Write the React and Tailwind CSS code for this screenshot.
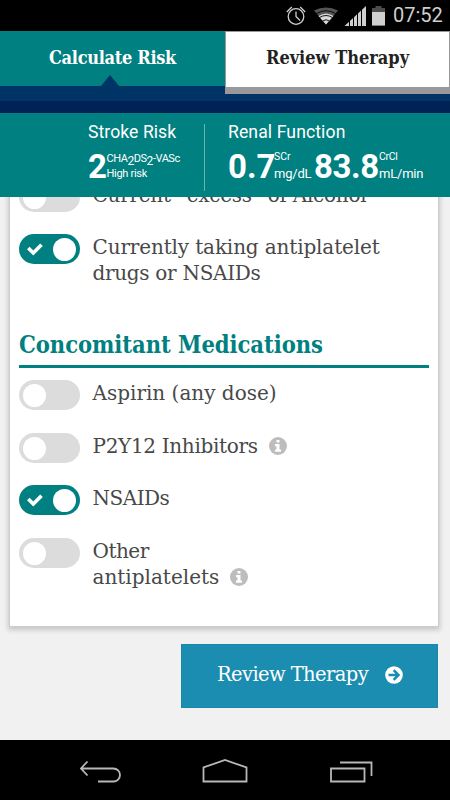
import React from 'react';

const slabBold = "font-['DejaVu_Serif_Condensed','DejaVu_Serif',serif] [font-stretch:condensed] font-bold";
const slab = "font-['DejaVu_Serif',serif]";

function StatusBar() {
  return (
    <div className="flex h-[31px] shrink-0 items-center justify-end bg-black pr-[7px] text-[#cfcfcf]">
      <svg width="104" height="24" viewBox="0 0 104 24" fill="none">
        <g stroke="#cfcfcf" strokeWidth="1.3">
          <circle cx="11" cy="12.5" r="7.800" />
          <path d="M11 7.500v5l4 4M1.800 8l5-5M20.200 8l-5-5" />
        </g>
        <path d="M29 6.500Q41 .500 53 6.500L41 20.500Z" fill="#555" />
        <path d="M33.500 12Q41 7 48.500 12L41 20.500Z" fill="#d8d8d8" />
        <path d="M31.500 9.500Q41 4 50.500 9.500M34.500 13.500Q41 9.500 47.500 13.500M37.500 17Q41 14.500 44.500 17" stroke="#000" strokeWidth="0.9" />
        <path d="M59.500 22L81 2v20Z" fill="#cfcfcf" />
        <path d="M64.500 2v20M68.500 2v20M72.500 2v20M76.500 2v20" stroke="#000" strokeWidth="1" />
        <path d="M90.500 2h6v2h3.500v17.500H87V4h3.500Z" fill="#4c4c4c" />
        <path d="M87 8h13v13.500H87Z" fill="#cfcfcf" />
      </svg>
      <span className="ml-[4px] w-[50px] whitespace-nowrap font-['Roboto',sans-serif] text-[20px] leading-[31px]">07:52</span>
    </div>
  );
}

function Tabs() {
  return (
    <div className="flex h-[70px] shrink-0 items-start bg-[#003366]">
      <div className="flex h-[55px] w-[225px] flex-col items-center bg-[#008080]">
        <span className={`${slabBold} mt-[13px] h-[31px] whitespace-nowrap text-[18px] leading-[28px] tracking-[-0.300px] text-white`}>
          Calculate Risk
        </span>
        <svg className="-ml-[5px]" width="18" height="11" viewBox="0 0 18 11"><path d="M0 11L9 0l9 11Z" fill="#003366" /></svg>
      </div>
      <div className="h-[63px] w-[225px] border-x border-t border-b-[7px] border-[#999] bg-white text-center">
        <span className={`${slabBold} mt-[12px] block whitespace-nowrap text-[18px] leading-[28px] text-[#222]`}>
          Review Therapy
        </span>
      </div>
    </div>
  );
}

function Stats() {
  return (
    <div className="flex h-[84px] shrink-0 bg-[#008080] pl-[88px] pt-[8px] font-['Roboto',sans-serif] text-white">
      <div className="w-[116px]">
        <div className="h-[24px] whitespace-nowrap text-[17.600px] leading-[22px] tracking-[0.060px]">Stroke Risk</div>
        <div className="flex pt-[5px]">
          <span className="w-[18.500px] text-[33px] font-bold leading-[34px]">2</span>
          <div className="whitespace-nowrap pt-[2px] text-[11px] leading-[14px]">
            <div className="flex h-[15px] tracking-[-0.450px]"><span>CHA</span><span className="pt-[2px] text-[12px]">2</span><span>DS</span><span className="pt-[2px] text-[12px]">2</span><span>-VASc</span></div>
            <div className="tracking-[-0.300px]">High risk</div>
          </div>
        </div>
      </div>
      <div className="mt-[3px] h-[67px] w-px bg-[#66b3b3]" />
      <div className="ml-[23px]">
        <div className="h-[24px] whitespace-nowrap text-[17.600px] leading-[22px] tracking-[0.100px]">Renal Function</div>
        <div className="flex pt-[5px]">
          <span className="w-[46px] text-[33px] font-bold leading-[34px]">0.7</span>
          <div className="w-[40px] whitespace-nowrap pt-[2px] leading-[14px]">
            <div className="h-[15px] text-[10.500px] leading-[10px]">SCr</div>
            <div className="text-[13px] tracking-[-0.200px]">mg/dL</div>
          </div>
          <span className="w-[65px] text-[33px] font-bold leading-[34px] tracking-[-0.400px]">83.8</span>
          <div className="whitespace-nowrap pt-[2px] leading-[14px]">
            <div className="h-[15px] text-[10.500px] leading-[10px] tracking-[-0.300px]">CrCl</div>
            <div className="text-[13px] tracking-[-0.200px]">mL/min</div>
          </div>
        </div>
      </div>
    </div>
  );
}

function Toggle({ on }) {
  return (
    <div className={`flex h-[30px] w-[61px] shrink-0 items-center rounded-full ${on ? 'bg-[#008080] pl-[8px]' : 'bg-[#dcdcdc] pl-[4px]'}`}>
      {on && (
        <svg className="mr-[10px]" width="16" height="15" viewBox="0 0 16 15" fill="none">
          <path d="M1.300 6L6.300 11L14.500 2.800" stroke="#fff" strokeWidth="3.700" />
        </svg>
      )}
      <div className="size-[23px] rounded-full bg-white" />
    </div>
  );
}

function Row({ on, children }) {
  return (
    <div className="flex items-start">
      <Toggle on={on} />
      <div className={`${slab} ml-[12.500px] whitespace-nowrap text-[20px] leading-[26.300px] text-[#484848]`}>{children}</div>
    </div>
  );
}

function Info() {
  return (
    <svg className="ml-[11px] inline-block align-[-2px]" width="18" height="18" viewBox="0 0 18 18">
      <circle cx="9" cy="9" r="9" fill="#bdbdbd" />
      <path d="M7.500 3H10.500V5.500H7.500ZM6 7H10.500V12.500H12V14.700H6V12.500H7.500V9.200H6Z" fill="#fff" />
    </svg>
  );
}

function NavBar() {
  return (
    <div className="flex h-[60px] shrink-0 items-center bg-black">
      <svg width="450" height="60" viewBox="0 0 450 60" fill="none" stroke="#b8b8b8" strokeWidth="1.8">
        <path d="M87.500 21.500L81 28.500L87.500 35.500M81 28.500H113.500A6.500 6.500 0 0 1 113.500 41.500H98" />
        <path d="M203.500 41.500V27.500L225 20L246.500 27.500V41.500Z" />
        <path d="M331 28.500H364.500V41.500H331ZM340 22.500H371.500V36" />
      </svg>
    </div>
  );
}

export default function App() {
  return (
    <div className="flex h-[800px] w-[450px] flex-col overflow-hidden bg-[#f1f1f1]">
      <StatusBar />
      <Tabs />
      <div className="h-[12px] shrink-0 bg-[#002255]" />
      <Stats />
      <div className="h-[543px] shrink-0 overflow-hidden pl-[10px]">
        <div className="-mt-[15px] h-[444px] w-[428px] bg-white pl-[9px] shadow-[0_0_0_1px_#ccc,0_2px_5px_2px_rgba(0,0,0,0.18)]">
          <div className="h-[52px]"><Row><span className="tracking-[-0.270px]">Current “excess” of Alcohol</span></Row></div>
          <div className="h-[94px]">
            <Row on>
              <span className="tracking-[-0.140px]">Currently taking antiplatelet</span><br />
              <span className="tracking-[-0.300px]">drugs or NSAIDs</span>
            </Row>
          </div>
          <div className={`${slabBold} h-[40px] w-[410px] whitespace-nowrap border-b-[3px] border-[#008080] text-[23.500px] leading-[34px] tracking-[-0.050px] text-[#008080]`}>
            Concomitant Medications
          </div>
          <div className="mt-[12px] flex flex-col">
            <div className="h-[53px]"><Row>Aspirin (any dose)</Row></div>
            <div className="h-[52px]"><Row><span className="tracking-[-0.330px]">P2Y12 Inhibitors</span><Info /></Row></div>
            <div className="h-[53px]"><Row on><span className="tracking-[-0.500px]">NSAIDs</span></Row></div>
            <Row><span className="tracking-[-0.500px]">Other</span><br />antiplatelets<Info /></Row>
          </div>
        </div>
        <button className={`${slab} ml-[171px] mt-[18px] flex h-[64px] w-[257px] items-center whitespace-nowrap border border-[#1789ab] bg-[#1b8db0] pb-[2px] pl-[35px] text-left text-[19.500px] text-white`}>
          <span className="w-[168px] tracking-[-0.600px]">Review Therapy</span>
          <svg width="18" height="18" viewBox="0 0 18 18" fill="none">
            <circle cx="9" cy="9" r="8.800" fill="#fff" />
            <path d="M3.500 9H13M8.700 4.200L13.500 9L8.700 13.800" stroke="#1b8db0" strokeWidth="2.500" />
          </svg>
        </button>
      </div>
      <NavBar />
    </div>
  );
}
